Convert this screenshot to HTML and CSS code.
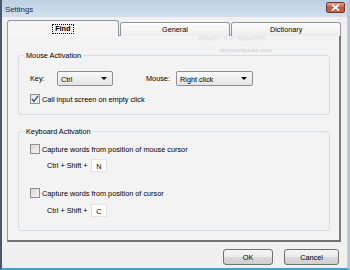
FILE: index.html
```html
<!DOCTYPE html>
<html>
<head>
<meta charset="utf-8">
<link rel="stylesheet" href="styles.css">
</head>
<body>
<div class="window">
  <div class="titlebar">
    <span class="title">Settings</span>
    <span class="close"><svg width="9" height="7" viewBox="0 0 9 7"><path d="M1 0.5 L8 6.5 M8 0.5 L1 6.5" stroke="#fff" stroke-width="1.8"/></svg></span>
  </div>
  <div class="client">
    <div class="tabs">
      <div class="tab active"><span class="focus">Find</span></div>
      <div class="tab">General</div>
      <div class="tab last">Dictionary</div>
    </div>
    <div class="panel">
      <div class="group g1">
        <span class="legend">Mouse Activation</span>
        <div class="row">
          <span class="lbl key">Key:</span>
          <div class="combo c1"><span>Ctrl</span><i class="arrow"></i></div>
          <span class="lbl mouse">Mouse:</span>
          <div class="combo c2"><span>Right click</span><i class="arrow"></i></div>
        </div>
        <div class="check row2"><span class="box checked"><svg width="8" height="8" viewBox="0 0 8 8"><path d="M1 4 L3 6.3 L7 1" fill="none" stroke="#3b4f8c" stroke-width="1.4"/></svg></span><span>Call input screen on empty click</span></div>
      </div>
      <div class="group g2">
        <span class="legend">Keyboard Activation</span>
        <div class="check"><span class="box"></span><span>Capture words from position of mouse cursor</span></div>
        <div class="hot h1"><span class="hk">Ctrl + Shift +</span><span class="keybox">N</span></div>
        <div class="check c2b"><span class="box"></span><span>Capture words from position of cursor</span></div>
        <div class="hot h2"><span class="hk">Ctrl + Shift +</span><span class="keybox">C</span></div>
      </div>
    </div>
    <div class="buttons">
      <div class="btn ok">OK</div>
      <div class="btn cancel">Cancel</div>
    </div>
  </div>
  <div class="wm">SOFTPEDIA</div>
  <div class="wm2">www.softpedia.com</div>
</div>
</body>
</html>
```
FILE: styles.css
```css
* { box-sizing: border-box; }
html, body { margin: 0; padding: 0; }
body {
  width: 350px; height: 270px; overflow: hidden;
  font-family: "Liberation Sans", Arial, sans-serif;
  font-size: 7.3px; color: #000;
}
.window {
  position: relative;
  width: 350px; height: 270px;
  display: flex; flex-direction: column;
  background: #f0f0f0;
  border-left: 2px solid #47596b;
  border-right: 3px solid #b9c9da;
  border-bottom: 2px solid #3aa3d6;
}
.titlebar {
  height: 17px; flex: none;
  display: flex; align-items: center; justify-content: space-between;
  padding: 0 2px 0 3px;
  background: linear-gradient(#bfd0e3, #d2dfed);
}
.title { font-size: 7.8px; color: #1b2838; padding-top: 1px; }
.close {
  width: 19px; height: 11px; margin-top: -2px;
  border: 1px solid #6b3a30; border-radius: 2px;
  background: linear-gradient(#e8a592, #c6563d 50%, #c9624a);
  display: flex; align-items: center; justify-content: center;
}
.client {
  flex: 1; display: flex; flex-direction: column;
  padding: 3px 6px 0 5px;
}
.tabs { display: flex; height: 16px; align-items: flex-end; position: relative; z-index: 1; margin-bottom: -1px; }
.tab {
  width: 111px; height: 14px; margin-right: 1px;
  border: 1px solid #8f999c; border-bottom: none;
  border-radius: 3px 3px 0 0;
  background: linear-gradient(#fdfdfd, #ececec);
  display: flex; align-items: center; justify-content: center;
  padding-top: 1px; line-height: 8px;
}
.tab.last { margin-right: 0; width: 110px; }
.tab.active {
  height: 16px; background: #f5f5f5; font-weight: bold; width: 112px;
}
.focus { border: 1px dotted #000; padding: 0 2px; line-height: 8px; }
.panel {
  height: 207px; flex: none;
  border: 1px solid #8f999c; border-right: 2px solid #7a7a7a; border-bottom: 2px solid #727272;
  background: #f3f3f3;
  padding: 19px 9px 0 10px;
}
.group {
  position: relative;
  width: 312px;
  border: 1px solid #d9dee2; border-radius: 3px;
  padding-left: 11px;
}
.g1 { height: 60px; padding-top: 15px; }
.g2 { height: 100px; margin-top: 16px; padding-top: 12px; }
.legend {
  position: absolute; left: 5px; top: -5px;
  background: #f3f3f3; padding: 0 2px; line-height: 9px;
}
.row { display: flex; align-items: center; height: 15px; }
.lbl.key { width: 27px; }
.lbl.mouse { width: 30px; margin-left: 33px; }
.combo {
  height: 15px; display: flex; align-items: center; justify-content: space-between;
  border: 1px solid #8e8f8f; border-radius: 2px;
  background: linear-gradient(#fafafa, #e4e4e4);
  padding: 0 5px 0 3px;
}
.combo span { padding-top: 1px; }
.c1 { width: 56px; }
.c2 { width: 77px; }
.arrow {
  width: 0; height: 0;
  border-left: 3px solid transparent; border-right: 3px solid transparent;
  border-top: 3px solid #000;
}
.check { display: flex; align-items: center; height: 10px; }
.row2 { margin-top: 8px; }
.box {
  width: 10px; height: 10px; margin-right: 2px; flex: none;
  border: 1px solid #8f8f8f;
  background: linear-gradient(135deg, #d8d8d8, #f6f6f6);
  display: flex; align-items: center; justify-content: center;
}
.box.checked { background: linear-gradient(135deg, #dde6f4, #f6f8fc); }
.hot { display: flex; align-items: center; height: 13px; margin-left: 17px; }
.h1 { margin-top: 5px; }
.c2b { margin-top: 16px; }
.h2 { margin-top: 6px; }
.hk { width: 44px; }
.keybox {
  width: 16px; height: 13px; background: #fff;
  border: 1px solid #e2e2e2;
  display: flex; align-items: center; justify-content: center;
  padding-top: 1px;
}
.buttons { display: flex; justify-content: flex-end; margin-top: 7px; padding-right: 2px; gap: 11px; }
.btn {
  height: 16px; display: flex; align-items: center; justify-content: center;
  border: 1px solid #707070; border-radius: 3px;
  background: linear-gradient(#f4f4f4 0%, #ebebeb 50%, #dadada 51%, #cfcfcf 100%);
  padding-top: 1px;
}
.ok { width: 50px; }
.cancel { width: 55px; }
.wm {
  position: absolute; left: 196px; top: 32px;
  font-size: 11.5px; line-height: 9px; font-weight: bold; letter-spacing: 0.2px;
  color: rgba(255,255,255,0.6);
  text-shadow: 0 0 1px rgba(150,150,150,0.5);
}
.wm2 {
  position: absolute; left: 218px; top: 47px;
  font-size: 6px; line-height: 7px; color: rgba(170,170,170,0.5);
}
```
